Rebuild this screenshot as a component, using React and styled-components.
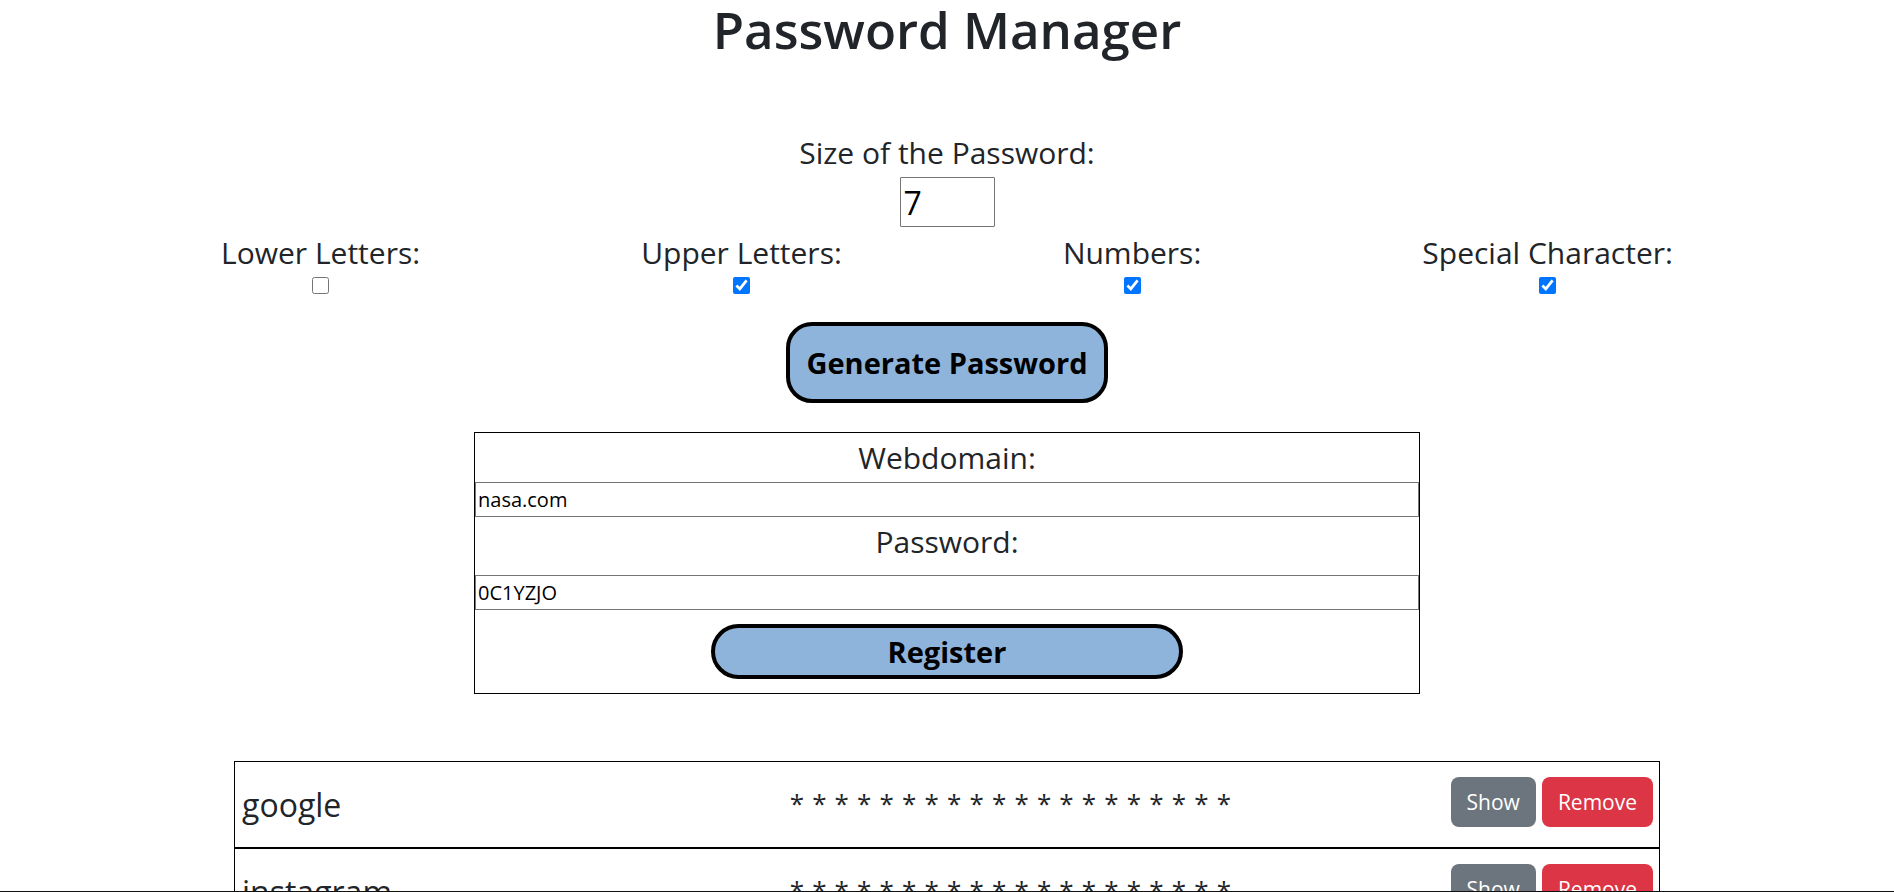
import React from "react";
import styled, { createGlobalStyle } from "styled-components";

const GlobalStyle = createGlobalStyle`
  * { box-sizing: border-box; }
  html, body { margin: 0; padding: 0; background: #fff; }
  body {
    font-family: "Open Sans", "Noto Sans", sans-serif;
    color: #212529;
    overflow: hidden;
  }
`;

const Page = styled.main`
  display: flex;
  flex-direction: column;
  align-items: center;
  width: 100%;
`;

const Title = styled.h1`
  margin: 0;
  font-size: 51px;
  font-weight: 600;
  line-height: 58px;
  text-align: center;
`;

const SizeSection = styled.section`
  margin-top: 72px;
  display: flex;
  flex-direction: column;
  align-items: center;
`;

const FieldLabel = styled.label`
  font-size: 30px;
  line-height: 45px;
  white-space: nowrap;
`;

const SizeInput = styled.input`
  width: 95px;
  height: 50px;
  margin-top: 2px;
  padding: 0 3px;
  border: 1px solid #767676;
  border-radius: 1px;
  font-family: inherit;
  font-size: 32px;
  color: #000;
`;

const OptionsRow = styled.div`
  width: 100%;
  margin-top: 3px;
  display: flex;
  justify-content: space-evenly;
`;

const Option = styled.div`
  display: flex;
  flex-direction: column;
  align-items: center;
`;

const Check = styled.input`
  width: 17px;
  height: 17px;
  margin: 2px 0 0;
`;

const PillButton = styled.button`
  border: 4px solid #000;
  background: #8fb4db;
  color: #000;
  font-family: inherit;
  font-weight: 700;
  font-size: 29px;
  cursor: pointer;
`;

const GenerateButton = styled(PillButton)`
  margin-top: 28px;
  padding: 12px 16px;
  line-height: 49px;
  border-radius: 26px;
`;

const RegisterForm = styled.form`
  margin-top: 29px;
  width: 946px;
  border: 1px solid #000;
  display: flex;
  flex-direction: column;
  align-items: center;
`;

const FormLabel = styled.label`
  font-size: 30px;
  line-height: 49px;
  margin-bottom: ${(p) => p.$gap || 0}px;
`;

const TextInput = styled.input`
  width: 100%;
  height: 35px;
  padding: 0 2px;
  border: 1px solid #767676;
  font-family: inherit;
  font-size: 20px;
  color: #000;
`;

const RegisterButton = styled(PillButton)`
  width: 50%;
  margin: 14px 0;
  padding: 0;
  line-height: 47px;
  border-radius: 28px;
`;

const Entries = styled.ul`
  list-style: none;
  margin: 67px 0 0;
  padding: 0;
  width: 1426px;
`;

const EntryRow = styled.li`
  display: grid;
  grid-template-columns: 1.3fr auto 1fr;
  align-items: center;
  height: 87px;
  padding: 0 6px 0 7px;
  border: 1px solid #000;
`;

const Name = styled.span`
  font-size: 32px;
  line-height: 46px;
`;

const Stars = styled.span`
  font-size: 26px;
  letter-spacing: 0.7px;
  white-space: pre;
  margin-bottom: 4px;
`;

const Actions = styled.div`
  justify-self: end;
  display: flex;
  gap: 6px;
  margin-bottom: 6px;
`;

const ActionButton = styled.button`
  height: 50px;
  padding: 0 16px;
  border: none;
  border-radius: 8px;
  background: ${(p) => (p.$variant === "danger" ? "#dc3545" : "#6c757d")};
  color: #fff;
  font-family: inherit;
  font-size: 21px;
  cursor: pointer;
`;

const BottomEdge = styled.div`
  position: fixed;
  left: 0;
  right: 0;
  bottom: 0;
  height: 1px;
  background: #111;
`;

const options = [
  { label: "Lower Letters:", checked: false },
  { label: "Upper Letters:", checked: true },
  { label: "Numbers:", checked: true },
  { label: "Special Character:", checked: true },
];

const entries = ["google", "instagram"];
const hidden = Array(20).fill("*").join(" ");

export default function App() {
  return (
    <>
      <GlobalStyle />
      <Page>
        <Title>Password Manager</Title>
        <SizeSection>
          <FieldLabel htmlFor="size">Size of the Password:</FieldLabel>
          <SizeInput id="size" type="text" defaultValue="7" />
        </SizeSection>
        <OptionsRow>
          {options.map((o) => (
            <Option key={o.label}>
              <FieldLabel>{o.label}</FieldLabel>
              <Check type="checkbox" defaultChecked={o.checked} />
            </Option>
          ))}
        </OptionsRow>
        <GenerateButton type="button">Generate Password</GenerateButton>
        <RegisterForm onSubmit={(e) => e.preventDefault()}>
          <FormLabel htmlFor="domain">Webdomain:</FormLabel>
          <TextInput id="domain" defaultValue="nasa.com" />
          <FormLabel htmlFor="pw" $gap={9}>Password:</FormLabel>
          <TextInput id="pw" defaultValue="0C1YZJO" />
          <RegisterButton type="submit">Register</RegisterButton>
        </RegisterForm>
        <Entries>
          {entries.map((name) => (
            <EntryRow key={name}>
              <Name>{name}</Name>
              <Stars>{hidden}</Stars>
              <Actions>
                <ActionButton type="button">Show</ActionButton>
                <ActionButton type="button" $variant="danger">Remove</ActionButton>
              </Actions>
            </EntryRow>
          ))}
        </Entries>
      </Page>
      <BottomEdge />
    </>
  );
}
